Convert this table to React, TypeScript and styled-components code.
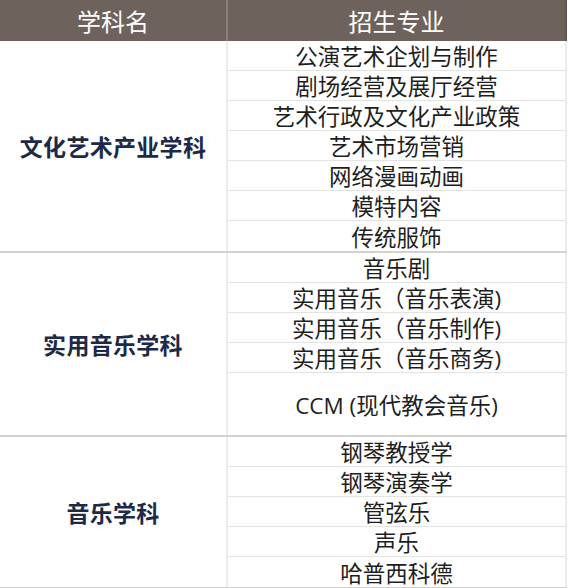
import styled, { createGlobalStyle } from "styled-components";

// #region ::: DATA
type Group = { name: string; majors: { label: string; tall?: boolean }[] };

const GROUPS: Group[] = [
  {
    name: "文化艺术产业学科",
    majors: [
      { label: "公演艺术企划与制作" },
      { label: "剧场经营及展厅经营" },
      { label: "艺术行政及文化产业政策" },
      { label: "艺术市场营销" },
      { label: "网络漫画动画" },
      { label: "模特内容" },
      { label: "传统服饰" },
    ],
  },
  {
    name: "实用音乐学科",
    majors: [
      { label: "音乐剧" },
      { label: "实用音乐（音乐表演)" },
      { label: "实用音乐（音乐制作)" },
      { label: "实用音乐（音乐商务)" },
      { label: "CCM (现代教会音乐)", tall: true },
    ],
  },
  {
    name: "音乐学科",
    majors: [
      { label: "钢琴教授学" },
      { label: "钢琴演奏学" },
      { label: "管弦乐" },
      { label: "声乐" },
      { label: "哈普西科德" },
    ],
  },
];
// #endregion ::: DATA

const GlobalStyle = createGlobalStyle`
  html, body {
    margin: 0;
    padding: 0;
    background: #ffffff;
  }
  body {
    font-family: "Open Sans", "Noto Sans CJK SC", sans-serif;
  }
`;

const Table = styled.div`
  width: 567px;
`;

const HeaderRow = styled.div`
  display: grid;
  grid-template-columns: 226px 2px 1fr;
  height: 41px;
  background: #6e635c;
  color: #ffffff;
  font-size: 24px;
  border-right: 2px solid #5f5650;
`;

const HeaderCell = styled.div`
  display: flex;
  align-items: center;
  justify-content: center;
  padding-bottom: 1px;
`;

const HeaderDivider = styled.div`
  background: #8a807a;
`;

const GroupRow = styled.div`
  display: flex;
  border-bottom: 2px solid #d2d2d2;
`;

const GroupLabel = styled.div`
  width: 226px;
  flex-shrink: 0;
  display: flex;
  align-items: center;
  justify-content: center;
  border-right: 2px solid #ececec;
  color: #1c2a48;
  font-weight: 700;
  font-size: 23px;
  letter-spacing: 0.3px;
`;

const Majors = styled.div`
  flex: 1;
  display: flex;
  flex-direction: column;
  border-right: 2px solid #ececec;
`;

const Major = styled.div<{ $tall?: boolean }>`
  box-sizing: border-box;
  height: ${(p) => (p.$tall ? 62 : 30)}px;
  display: flex;
  align-items: center;
  justify-content: center;
  color: #1e1e1e;
  font-size: 22.5px;
  border-bottom: 1px solid #e3e3e3;

  &:last-child {
    border-bottom: none;
  }
`;

export default function App() {
  return (
    <>
      <GlobalStyle />
      <Table>
        <HeaderRow>
          <HeaderCell>学科名</HeaderCell>
          <HeaderDivider />
          <HeaderCell>招生专业</HeaderCell>
        </HeaderRow>
        {GROUPS.map((group) => (
          <GroupRow key={group.name}>
            <GroupLabel>{group.name}</GroupLabel>
            <Majors>
              {group.majors.map((m) => (
                <Major key={m.label} $tall={m.tall}>
                  {m.label}
                </Major>
              ))}
            </Majors>
          </GroupRow>
        ))}
      </Table>
    </>
  );
}
